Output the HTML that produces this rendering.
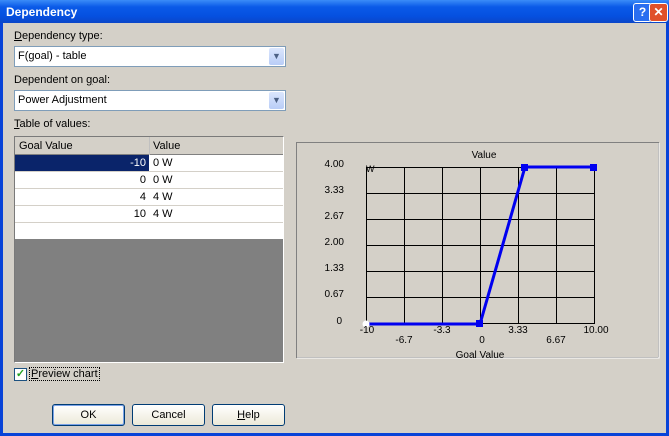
<!DOCTYPE html><html><head><style>
body{margin:0;width:669px;height:436px;overflow:hidden;font-family:"Liberation Sans",sans-serif;font-size:11px;}
.win{position:absolute;left:0;top:0;width:669px;height:436px;background:#0843d8;}
.title{position:absolute;left:0;top:0;width:669px;height:23px;background:linear-gradient(#3a8cf8,#0a5ae8 30%,#0550e0 70%,#0a46c8);color:#fff;font-weight:bold;font-size:12px;}
.title span{position:absolute;left:6px;top:5px;}
.tb{position:absolute;top:3px;width:17px;height:17px;border:1px solid #fff;border-radius:3px;color:#fff;font-weight:bold;text-align:center;line-height:17px;font-size:12px;}
.body{position:absolute;left:3px;top:23px;width:663px;height:410px;background:#d4d0c8;}
.a{position:absolute;}
.combo{position:absolute;left:14px;width:270px;height:19px;background:#fff;border:1px solid #7f9db9;}
.combo span{position:absolute;left:3px;top:3px;}
.arr{position:absolute;right:1px;top:1px;width:15px;height:17px;background:linear-gradient(#dbe6fd,#b9cdf7);border-radius:2px;color:#4d6185;font-size:9px;text-align:center;line-height:17px;}
table{border-collapse:collapse;}
.btn{position:absolute;top:404px;width:71px;height:20px;border:1px solid #003c74;border-radius:3px;background:linear-gradient(#fff,#ece9d8);text-align:center;line-height:20px;}
</style></head><body><div class="win">
<div class="title"><span>Dependency</span>
<div class="tb" style="left:633px;background:#2a6ef0">?</div>
<div class="tb" style="left:649px;background:#e0502a">✕</div></div>
<div class="body" style="left:3px"></div>
<div class="a" style="left:14px;top:30px"><u>D</u>ependency type:</div>
<div class="combo" style="top:46px"><span>F(goal) - table</span><div class="arr">▼</div></div>
<div class="a" style="left:14px;top:74px">Dependent on <u>g</u>oal:</div>
<div class="combo" style="top:90px"><span>Power Adjustment</span><div class="arr">▼</div></div>
<div class="a" style="left:14px;top:118px"><u>T</u>able of values:</div>
<div class="a" style="left:14px;top:136px;width:268px;height:225px;background:#808080;border:1px solid #7a7a7a;border-right-color:#fff;border-bottom-color:#fff">
<div style="position:absolute;left:0;top:0;width:268px;height:17px;background:#d4d0c8;border-bottom:1px solid #808080"></div>
<div class="a" style="left:4px;top:3px">Goal Value</div>
<div class="a" style="left:134px;top:0;width:1px;height:102px;background:#c0c0c0"></div>
<div class="a" style="left:138px;top:3px">Value</div>
<div class="a" style="left:0;top:18px;width:268px;height:84px;background:#fff"></div>
<div class="a" style="left:0;top:18px;width:134px;height:16px;background:#0a246a"></div>
<div class="a" style="left:0;top:34px;width:268px;height:1px;background:#d4d0c8"></div>
<div class="a" style="left:0;top:51px;width:268px;height:1px;background:#d4d0c8"></div>
<div class="a" style="left:0;top:68px;width:268px;height:1px;background:#d4d0c8"></div>
<div class="a" style="left:0;top:85px;width:268px;height:1px;background:#d4d0c8"></div>
<div class="a" style="left:104px;top:20px;width:27px;text-align:right;color:#fff">-10</div>
<div class="a" style="left:104px;top:37px;width:27px;text-align:right">0</div>
<div class="a" style="left:104px;top:54px;width:27px;text-align:right">4</div>
<div class="a" style="left:104px;top:71px;width:27px;text-align:right">10</div>
<div class="a" style="left:138px;top:20px">0 W</div>
<div class="a" style="left:138px;top:37px">0 W</div>
<div class="a" style="left:138px;top:54px">4 W</div>
<div class="a" style="left:138px;top:71px">4 W</div>
</div>
<svg class="a" style="left:296px;top:142px" width="364" height="218" font-family="Liberation Sans" font-size="10">
<rect x="0.5" y="0.5" width="362" height="215" fill="none" stroke="#808080"/>
<path d="M1 216H363V1" stroke="#fff" fill="none"/>
<g stroke="#000" stroke-width="1">
<path d="M70.5 25V182M108.5 25V182M146.5 25V182M184.5 25V182M222.5 25V182M260.5 25V182M298.5 25V182"/>
<path d="M70 25.5H298M70 51.5H298M70 77.5H298M70 103.5H298M70 129.5H298M70 155.5H298M70 181.5H298"/>
</g>
<polyline points="70,182 184,182 229,25 298,25" fill="none" stroke="#0000f0" stroke-width="3"/>
<rect x="180" y="178" width="7" height="7" fill="#0000f0"/><rect x="225" y="22" width="7" height="7" fill="#0000f0"/><rect x="294" y="22" width="7" height="7" fill="#0000f0"/>
<circle cx="70" cy="182" r="3.5" fill="#fff"/>
<g text-anchor="end"><text x="48" y="25">4.00</text><text x="48" y="51">3.33</text><text x="48" y="77">2.67</text><text x="48" y="103">2.00</text><text x="48" y="129">1.33</text><text x="48" y="155">0.67</text><text x="46" y="182">0</text></g>
<text x="70" y="30" font-size="9">W</text>
<text x="188" y="16" text-anchor="middle">Value</text>
<g text-anchor="middle"><text x="71" y="191">-10</text><text x="146" y="191">-3.3</text><text x="222" y="191">3.33</text><text x="300" y="191">10.00</text>
<text x="108" y="201">-6.7</text><text x="186" y="201">0</text><text x="260" y="201">6.67</text><text x="184" y="216">Goal Value</text></g>
</svg>
<div class="a" style="left:14px;top:368px;width:11px;height:11px;border:1px solid #1c5180;background:#fff;color:#21a121;font-size:11px;line-height:11px;text-align:center;font-weight:bold">✓</div>
<div class="a" style="left:29px;top:367px;border:1px dotted #000;padding:0 1px"><u>P</u>review chart</div>
<div class="btn" style="left:52px;border-color:#003c74;box-shadow:inset 0 0 0 1px #7ba2e7">OK</div>
<div class="btn" style="left:132px">Cancel</div>
<div class="btn" style="left:212px"><u>H</u>elp</div>
</div></body></html>
